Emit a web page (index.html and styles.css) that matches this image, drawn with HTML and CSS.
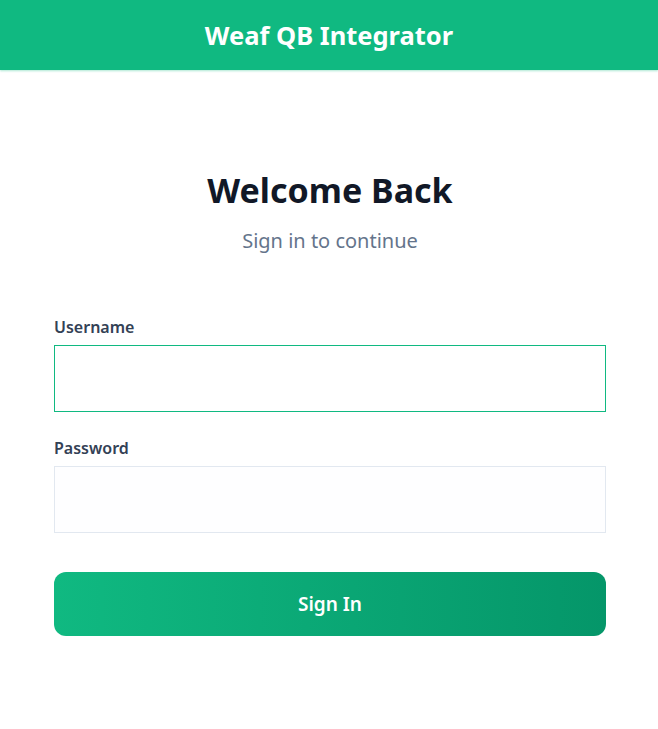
FILE: index.html
```html
<!DOCTYPE html>
<html lang="en">
<head>
  <meta charset="UTF-8" />
  <title>Weaf QB Integrator</title>
  <link rel="stylesheet" href="styles.css">
</head>
<body>

  <header class="topbar">
    <h1>Weaf QB Integrator</h1>
  </header>

  <main class="login">
    <h2>Welcome Back</h2>
    <p class="subtitle">Sign in to continue</p>

    <form class="login-form" onsubmit="return false;">
      <label class="field">
        <span>Username</span>
        <input type="text" class="focused" />
      </label>
      <label class="field">
        <span>Password</span>
        <input type="password" />
      </label>
      <button type="submit">Sign In</button>
    </form>
  </main>

</body>
</html>
```

FILE: styles.css
```css
body { margin: 0; font-family: "Noto Sans", "Open Sans", sans-serif; background: #fff; color: #111827; }
.topbar { height: 70px; background: #10b981; display: flex; align-items: center; justify-content: center; box-shadow: 0 1px 2px rgba(16,185,129,0.35); }
.topbar h1 { margin: 0; color: #fff; font-size: 25.5px; font-weight: 700; }
.login { padding: 97px 52px 0 54px; }
.login h2 { margin: 0; text-align: center; font-size: 34px; font-weight: 700; line-height: 46px; color: #111827; }
.subtitle { margin: 14px 0 0; text-align: center; font-size: 20px; color: #64748b; line-height: 28px; }
.login-form { margin-top: 60px; display: flex; flex-direction: column; }
.field { display: flex; flex-direction: column; margin-bottom: 24px; }
.field span { font-size: 16px; font-weight: 600; color: #334155; line-height: 24px; margin-bottom: 6px; }
.field input { box-sizing: border-box; height: 67px; border: 1px solid #e2e8f0; background: #fefeff; padding: 0 16px; font-size: 16px; outline: none; }
.field input.focused { border: 1px solid #10b981; background: #fff; }
button { margin-top: 15px; height: 64px; border: none; border-radius: 12px; background: linear-gradient(90deg, #10b981, #059669); color: #fff; font-family: inherit; font-size: 19px; font-weight: 600; cursor: pointer; }
```
